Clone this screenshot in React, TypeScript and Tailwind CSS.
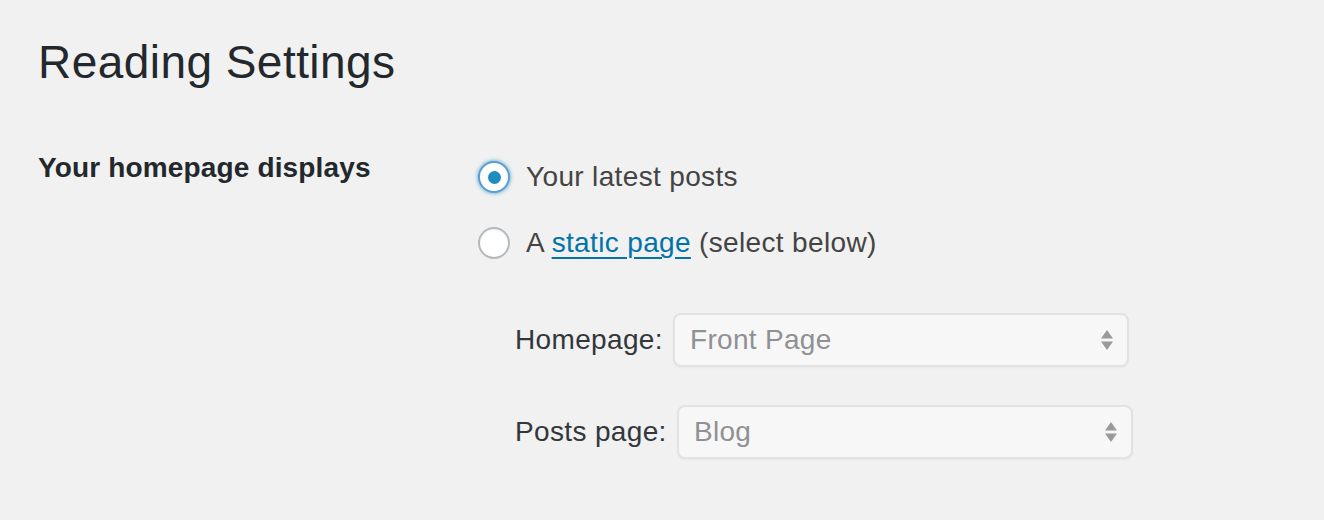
import React from "react";

function Radio({ checked }: { checked?: boolean }) {
  return checked ? (
    <span className="flex h-[32px] w-[32px] shrink-0 items-center justify-center rounded-full border-2 border-[#5b9dd9] bg-white shadow-[0_0_4px_rgba(30,140,190,0.8)]">
      <span className="block h-[13px] w-[13px] rounded-full bg-[#1e8cbe]" />
    </span>
  ) : (
    <span className="block h-[32px] w-[32px] shrink-0 rounded-full border-2 border-[#b4b9be] bg-white shadow-[inset_0_1px_2px_rgba(0,0,0,0.07)]" />
  );
}

function Select({ value }: { value: string }) {
  return (
    <div className="flex h-[54px] w-[456px] items-center justify-between rounded-[8px] border-2 border-[#e2e2e2] bg-[#f7f7f7] pl-[15px] pr-[12px] shadow-[0_1px_2px_rgba(0,0,0,0.04)]">
      <span className="text-[28px] leading-[40px] tracking-[0.3px] text-[#8f9194]">{value}</span>
      <svg width="16" height="24" viewBox="0 0 16 24" className="text-[#9a9a9a]">
        <path d="M8 2 L14 10.5 L2 10.5 Z" fill="currentColor" />
        <path d="M8 22 L14 13.5 L2 13.5 Z" fill="currentColor" />
      </svg>
    </div>
  );
}

export default function App() {
  return (
    <div
      className="min-h-[520px] bg-[#f1f1f1] pl-[38px] pt-[32px]"
      style={{ fontFamily: '"Liberation Sans", Arial, Helvetica, sans-serif' }}
    >
      <h1 className="text-[46px] font-normal leading-[60px] tracking-[0.45px] text-[#23282d]">Reading Settings</h1>
      <div className="mt-[56px] flex">
        <div className="w-[440px] shrink-0 text-[28px] font-bold leading-[40px] tracking-[0.15px] text-[#23282d]">
          Your homepage displays
        </div>
        <div className="pt-[9px] text-[28px] leading-[40px] tracking-[0.35px] text-[#444]">
          <div className="flex h-[40px] items-center gap-[16px]">
            <Radio checked />
            <span>Your latest posts</span>
          </div>
          <div className="mt-[26px] flex h-[40px] items-center gap-[16px]">
            <Radio />
            <span>
              A{" "}
              <a href="#" className="text-[#0073aa] underline decoration-2 underline-offset-[5px]">
                static page
              </a>{" "}
              (select below)
            </span>
          </div>
          <div className="ml-[37px] mt-[50px] flex items-center">
            <span className="w-[158px] shrink-0 text-[#32373c]">Homepage:</span>
            <Select value="Front Page" />
          </div>
          <div className="ml-[37px] mt-[38px] flex items-center">
            <span className="w-[162px] shrink-0 text-[#32373c]">Posts page:</span>
            <Select value="Blog" />
          </div>
        </div>
      </div>
    </div>
  );
}
